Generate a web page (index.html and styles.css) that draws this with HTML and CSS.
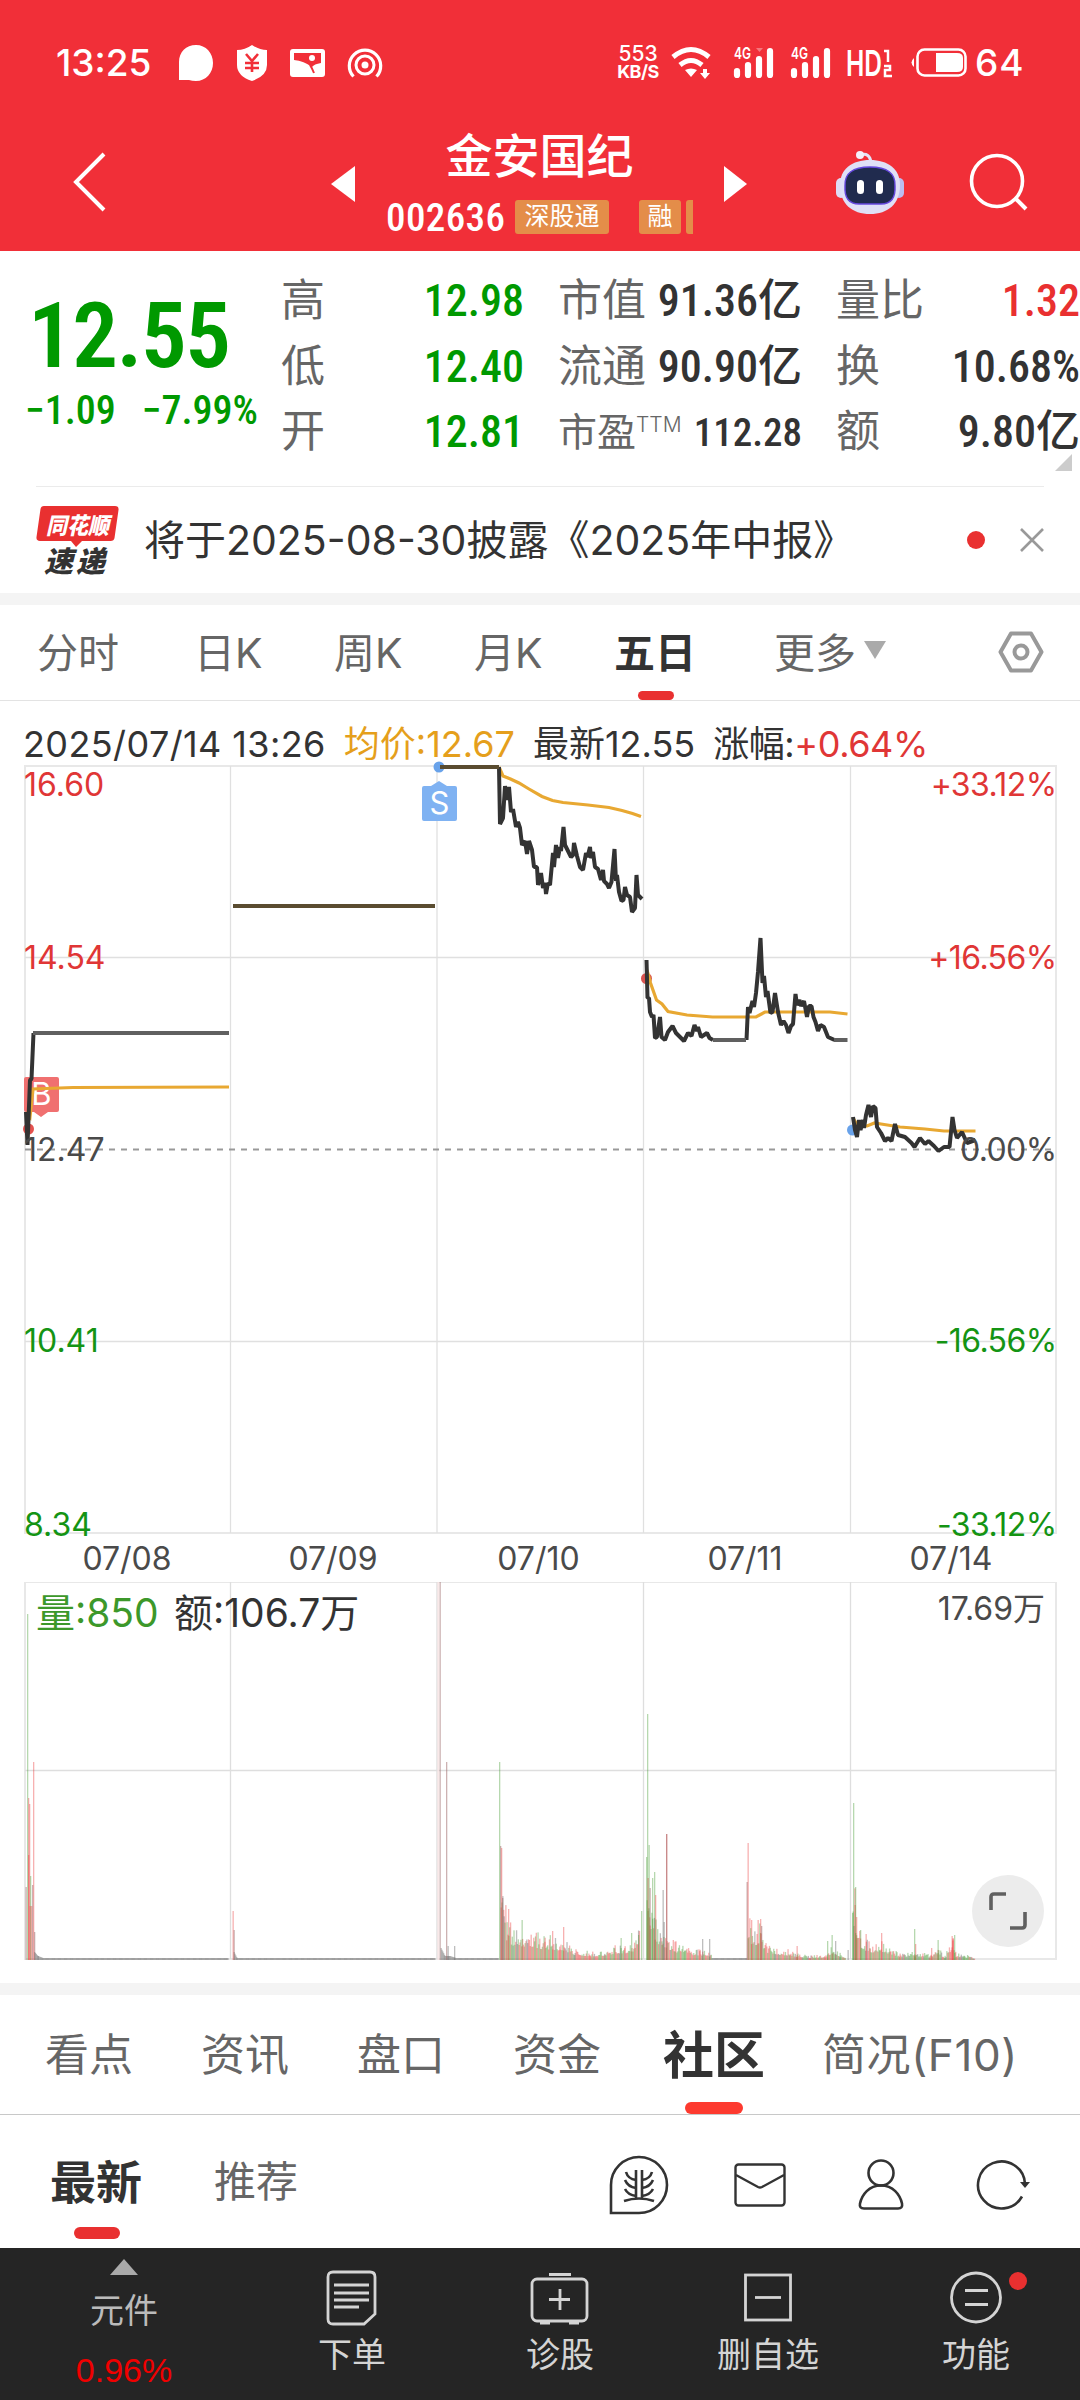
FILE: index.html
```html
<!DOCTYPE html>
<html lang="zh-CN">
<head>
    <meta charset="UTF-8">
    <meta name="viewport" content="width=device-width, initial-scale=1.0">
    <title>金安国纪 002636</title>
    <link rel="stylesheet" href="styles.css">
</head>
<body>
    <header class="top">
        <div class="status-bar">
            <span class="clock">13:25</span>
            <svg class="status-left" width="210" height="40" viewBox="0 0 210 40" fill="#fff">
                <path d="M2 37V19C2 9 9 2 19 2s17 8 17 18-7 18-17 18q-4 0-7-1z"/>
                <path d="M75 2q7 5 15 5v15q0 11-15 16q-15-5-15-16V7q8 0 15-5z"/>
                <path d="M69 11l6 7 6-7M68 20h14M68 25h14M75 18v11" fill="none" stroke="#f12f38" stroke-width="2.6"/>
                <rect x="113" y="6" width="35" height="28" rx="3"/>
                <path d="M117 10h27v10q-7 1-9 4-8-6-18-7z" fill="#f12f38"/>
                <path d="M133 22q2 3 4 8" fill="none" stroke="#f12f38" stroke-width="2"/>
                <circle cx="135" cy="15" r="3"/>
                <circle cx="188" cy="22" r="3.5"/>
                <circle cx="188" cy="22" r="9" fill="none" stroke="#fff" stroke-width="3"/>
                <path d="M176.500 33.500a15.700 15.700 0 1 1 23 0" fill="none" stroke="#fff" stroke-width="3.200"/>
            </svg>
            <div class="speed"><span>553</span><b>KB/S</b></div>
            <svg class="status-right" width="222" height="40" viewBox="0 0 222 40" fill="#fff">
                <path d="M3 14q18-15 36 0" fill="none" stroke="#fff" stroke-width="5"/>
                <path d="M10 22q11-9 22 0" fill="none" stroke="#fff" stroke-width="5"/>
                <path d="M15 27q6-3 12 0l-6 7zM33 26h4v4h3l-5 6-5-6h3z"/>
                <text class="net" x="64" y="16" textLength="17" lengthAdjust="spacingAndGlyphs">4G</text>
                <path d="M67 28v4M78 22v10M89 16v16M100 8v24M124 28v4M135 22v10M146 16v16M157 8v24" stroke="#fff" stroke-width="6.200" stroke-linecap="round"/>
                <path d="M86 5h7l-3.500 4z" opacity=".35"/>
                <text class="net" x="121" y="16" textLength="17" lengthAdjust="spacingAndGlyphs">4G</text>
                <text class="hd" x="176" y="33" textLength="36" lengthAdjust="spacingAndGlyphs">HD</text>
                <path d="M214 8h4v11M214 23h6v4h-5v6h7" fill="none" stroke="#fff" stroke-width="2.500"/>
            </svg>
            <svg class="battery" width="58" height="30" viewBox="0 0 58 30">
                <rect x="6.500" y="1.500" width="48" height="26" rx="7" fill="none" stroke="#fff" stroke-width="2.600"/>
                <path d="M25 5h21q6 0 6 5v9q0 5-6 5H25z" fill="#fff"/>
                <path d="M3 10v9q-5-4.500 0-9z" fill="#fff"/>
            </svg>
            <span class="clock level">64</span>
        </div>
        <div class="title-bar">
            <svg class="back" width="40" height="64" viewBox="0 0 40 64"><path d="M34 4L6 32l28 28" fill="none" stroke="#fff" stroke-width="4"/></svg>
            <svg class="prev" width="24" height="36" viewBox="0 0 24 36"><path d="M24 0v36L0 18z" fill="#fff"/></svg>
            <div class="stock">
                <div class="stock-name">金安国纪</div>
                <div class="stock-sub">
                    <span class="code"><i class="din">002636</i></span>
                    <span class="tag">深股通</span>
                    <span class="tag tag-rong">融</span>
                    <span class="tag tag-cut"></span>
                </div>
            </div>
            <svg class="next" width="24" height="36" viewBox="0 0 24 36"><path d="M0 0v36l23-18z" fill="#fff"/></svg>
            <svg class="robot" width="70" height="66" viewBox="0 0 70 66">
                <path d="M25 6q10-3 11 8" fill="none" stroke="#e4e3f6" stroke-width="3"/>
                <circle cx="25" cy="6" r="4" fill="#f4f0fa"/>
                <rect x="1" y="29" width="10" height="20" rx="5" fill="#dedcf5"/>
                <rect x="59" y="29" width="10" height="20" rx="5" fill="#bcbdf0"/>
                <path d="M5 36c0-16 12-25 30-25s30 9 30 25c0 19-12 29-30 29S5 55 5 36z" fill="#e0e0f6"/>
                <path d="M10 37q-1-19 25-19t25 19q1 18-14 18H24q-15 0-14-18z" fill="#202b4e" stroke="#6548dd" stroke-width="1.500"/>
                <rect x="22" y="31" width="7" height="14" rx="3.500" fill="#fff"/>
                <rect x="41" y="31" width="7" height="14" rx="3.500" fill="#fff"/>
            </svg>
            <svg class="search" width="60" height="60" viewBox="0 0 60 60"><circle cx="28" cy="29" r="25.500" fill="none" stroke="#fff" stroke-width="3.600"/><path d="M46 46l11 11" stroke="#fff" stroke-width="4"/></svg>
        </div>
    </header>

    <section class="quote">
        <div class="price-box">
            <div class="price"><i class="din">12.55</i></div>
            <div class="change"><i class="din">−1.09</i><i class="din pct">−7.99%</i></div>
        </div>
        <div class="stats">
            <span class="label">高</span><span class="value green"><i class="din">12.98</i></span>
            <span class="label">市值</span><span class="value"><i class="din">91.36</i>亿</span>
            <span class="label">量比</span><span class="value red"><i class="din">1.32</i></span>
            <span class="label">低</span><span class="value green"><i class="din">12.40</i></span>
            <span class="label">流通</span><span class="value"><i class="din">90.90</i>亿</span>
            <span class="label">换</span><span class="value"><i class="din">10.68%</i></span>
            <span class="label">开</span><span class="value green"><i class="din">12.81</i></span>
            <span class="label small">市盈<sup>TTM</sup></span><span class="value small"><i class="din">112.28</i></span>
            <span class="label">额</span><span class="value"><i class="din">9.80</i>亿</span>
        </div>
        <svg class="corner" width="17" height="17" viewBox="0 0 17 17"><path d="M17 0v17H0z" fill="#ccc"/></svg>
    </section>

    <section class="notice">
        <svg width="84" height="72" viewBox="0 0 84 72">
            <path d="M8 2h71q4 0 3.500 4l-4 28q-.5 3-4 3H46l-6 6-5-6H4q-4 0-3.500-4l4-28q.5-3 3.500-3z" fill="#e93030"/>
            <text class="logo-a" x="10" y="30" textLength="63" lengthAdjust="spacingAndGlyphs">同花顺</text>
            <text class="logo-b" x="8" y="68">速</text>
            <text class="logo-b" x="40" y="68">递</text>
        </svg>
        <p>将于2025-08-30披露《2025年中报》</p>
        <span class="dot"></span>
        <svg class="close" width="24" height="24" viewBox="0 0 24 24"><path d="M1 1l22 22M23 1L1 23" stroke="#999" stroke-width="2.600"/></svg>
    </section>

    <nav class="periods">
        <span>分时</span>
        <span>日K</span>
        <span>周K</span>
        <span>月K</span>
        <span class="active">五日</span>
        <span class="more">更多<svg width="22" height="18" viewBox="0 0 22 18"><path d="M0 0h22L11 18z" fill="#aaa"/></svg></span>
        <svg class="gear" width="46" height="42" viewBox="0 0 46 42" fill="none" stroke="#999" stroke-width="4"><path d="M13 2.500h20L43.500 21 33 39.500H13L2.500 21z" stroke-linejoin="round"/><circle cx="23" cy="21" r="6.500"/></svg>
    </nav>

    <div class="chart-info">
        <span class="time">2025/07/14 13:26</span>
        <span class="avg">均价:12.67</span>
        <span>最新12.55</span>
        <span class="rise">涨幅:<em>+0.64%</em></span>
    </div>

    <svg class="price-chart" width="1080" height="832" viewBox="0 0 1080 832">
        <g fill="none" stroke="#e8e8e8" stroke-width="2">
            <rect x="25" y="16" width="1031" height="767"/>
            <path d="M25 207.500H1056M25 591.500H1056M230.500 16V783M437 16V783M643.500 16V783M850.500 16V783" stroke="#e0e0e0" stroke-width="1.300"/>
        </g>
        <path d="M25 399.500H1056" stroke="#999" stroke-width="2" stroke-dasharray="6 6"/>
        <circle cx="28.500" cy="379" r="5.500" fill="#e4524f"/>
        <circle cx="439" cy="17" r="5.500" fill="#68a2ea"/>
        <circle cx="646.500" cy="228.500" r="5.500" fill="#d95350"/>
        <circle cx="852.500" cy="380" r="5.500" fill="#68a2ea"/>
        <path d="M26 327h31q2 0 2 2v31q0 2-2 2h-9l-7 5-7-5h-8q-2 0-2-2v-31q0-2 2-2z" fill="#f07070"/>
        <text class="mark" x="41.500" y="355">B</text>
        <path d="M424 36h7l8-5 8 5h8q2 0 2 2v31q0 2-2 2h-31q-2 0-2-2V38q0-2 2-2z" fill="#7fb2f2"/>
        <text class="mark" x="439.500" y="64">S</text>
        <g fill="none" stroke="#e8a832" stroke-width="3.200">
            <polyline points="26,362 30,367 33,339 73,337.500 229,337"/>
            <polyline points="499,17 503,26 510.500,29 519,33 529,39 542,46.500 552.500,50.500 563,52.500 588,55 609,57.500 622,60.500 632.500,63.500 641,66.500"/>
            <polyline points="647,220 650.500,233 656.500,250 662,254 668,261.500 687,265 712.500,267 756,267 765,262 830,262 847.500,264"/>
            <polyline points="853,368 858,376 867,376 874.500,373 881,374 900,377 925,379 944,381 975.500,381"/>
        </g>
        <g fill="none" stroke="#333" stroke-width="4" stroke-linejoin="bevel">
            <polyline points="26,362 27.500,395 30,330 31.500,329 33.500,283"/>
            <polyline points="499,17 500,74 503,68 505,36 507,50 509,37 511,62 513,59 516,77 518,72 520,78 522,95 525,91 527,104 529,91 532,100 534,117 537,117 538,135 541,123 543,138 545,133 546,144 548,133 550,135 553,103 554,117 556,95 558,108 560,97 561,101 563.500,77 565,95 567,99 571,107 573,105 574,93 577,106 580,117 583,120 586,103 587.500,107 590,97 591,108 593,102 595,117 598,119 601,130 603,120 604,131 607,134 609,138 611.500,132 614.500,99 616,131 617,125 619,142 621.500,151 623.500,150 625,137 627,145 630,147 632,162 635,158 636.500,125 638,145 642,149"/>
            <polyline points="646.500,210 647.500,248 649,248 650,262 652,267 653.500,265 655,288 657,287 660,267 661.500,287 665,290 668,282 672.500,276 676,283 680,287 684,291 688,283 691.500,286 694.500,275 697,281 698,277 701,287 707,283 709.500,288 713,290"/>
            <polyline points="746.500,290 748,257 749.500,263 752.500,251 754,257 756,243 758,222 760.500,188 762.500,233 764,226 766,247 767.500,241 770.500,263 772.500,262 775,243 778,262 781,275 783.500,271 786,275 788.500,283 791,276 793,274 795.500,244 797,255 799.500,250 801,256 804,251 807,267 809,256 811.500,256 813.500,267 815.500,272 818,281 820.500,275 824,277 828,287 834.500,290"/>
            <polyline points="853,367 855,380 857,387 859,370 860.500,380 863,370 864,378 866,365 868.500,355 871,367 873,356 875.500,358 877,377 881,383 885,391 888,388 891.500,391 895,374 898,385 905,387 911.500,393 914.500,397 920,388 925,394 928.500,391 934,396 938.500,401 944,397 949.500,397 952.500,367 954.500,380 957,388 962,382 967,393 975.500,390"/>
        </g>
        <!-- limit-up / limit-down stretches -->
        <path d="M33 283H229M713 290H746M834 290H847.500" stroke="#606060" stroke-width="4"/>
        <path d="M233 156H435M440 17H499" stroke="#5a4c30" stroke-width="4"/>
        <g class="axis">
            <text class="up" x="24" y="46">16.60</text>
            <text class="up" x="24" y="219">14.54</text>
            <text x="24" y="411">12.47</text>
            <text class="down" x="24" y="602">10.41</text>
            <text class="down" x="24" y="785.500">8.34</text>
        </g>
        <g class="axis right">
            <text class="up" x="1056.500" y="46">+33.12%</text>
            <text class="up" x="1056.500" y="219">+16.56%</text>
            <text x="1056.500" y="411">0.00%</text>
            <text class="down" x="1056.500" y="602">-16.56%</text>
            <text class="down" x="1056.500" y="785.500">-33.12%</text>
        </g>
        <g class="axis dates">
            <text x="127" y="820">07/08</text>
            <text x="333" y="820">07/09</text>
            <text x="538.500" y="820">07/10</text>
            <text x="745" y="820">07/11</text>
            <text x="951" y="820">07/14</text>
        </g>
    </svg>

    <div class="volume">
        <svg width="1080" height="401" viewBox="0 0 1080 401">
            <rect x="25" y="0" width="1031" height="377" fill="none" stroke="#e8e8e8" stroke-width="2"/>
            <path d="M25 188.500H1056M230.500 0V377M437 0V377M643.500 0V377M850.500 0V377" stroke="#dedede" stroke-width="1.300"/>
            <g id="bars"></g>
            <text class="vol" x="36" y="45" fill="#3c982a">量:850</text>
            <text class="vol" x="174" y="45" fill="#333">额:106.7万</text>
            <text class="axis-vol" x="1045" y="38">17.69万</text>
        </svg>
        <button class="expand"><svg width="38" height="38" viewBox="0 0 38 38" fill="none" stroke="#606060" stroke-width="3.600"><path d="M2 18V5q0-3 3-3h12M36 20v13q0 3-3 3H21"/></svg></button>
    </div>

    <nav class="sections">
        <span>看点</span>
        <span>资讯</span>
        <span>盘口</span>
        <span>资金</span>
        <span class="active">社区</span>
        <span class="f10">简况(F10)</span>
    </nav>

    <div class="community">
        <span class="active">最新</span>
        <span class="rec">推荐</span>
        <div class="tools">
            <svg width="60" height="60" viewBox="0 0 60 60" fill="none" stroke="#333" stroke-width="2.600">
                <path d="M2 58V30a28 28 0 1 1 28 28z"/>
                <path d="M27 44V15M33 44V15M15 46q15-5 30 0M17 17q2 7 10 8M16 25q3 7 11 8M16 34q3 6 11 7M43 17q-2 7-10 8M44 25q-3 7-11 8M44 34q-3 6-11 7"/>
            </svg>
            <svg class="mail" width="52" height="44" viewBox="0 0 52 44" fill="none" stroke="#333" stroke-width="2.400"><rect x="1.500" y="1.500" width="49" height="41" rx="3"/><path d="M2 12l22 12q2 1 4 0l22-12"/></svg>
            <svg class="person" width="46" height="52" viewBox="0 0 46 52" fill="none" stroke="#333" stroke-width="2.600"><circle cx="23" cy="14" r="12.500"/><path d="M23 26.500c-12 0-19 9-21 18q-1 5 4 5h34q5 0 4-5c-2-9-9-18-21-18z"/></svg>
            <svg class="refresh" width="56" height="52" viewBox="0 0 56 52" fill="none" stroke="#333" stroke-width="2.600"><path d="M49 25A23.500 23.500 0 1 0 46 37.500"/><path d="M44 23h10l-5 6z" fill="#333" stroke="none"/></svg>
        </div>
    </div>

    <footer class="bottom">
        <div class="sector">
            <svg width="28" height="16" viewBox="0 0 28 16"><path d="M14 0l14 16H0z" fill="#aaa"/></svg>
            <span>元件</span>
            <b>0.96%</b>
        </div>
        <div class="action">
            <svg width="52" height="56" viewBox="0 0 52 56" fill="none" stroke="#d4d4d4" stroke-width="2.800"><path d="M7 2h37q5 0 5 5v37L38 54H7q-5 0-5-5V7q0-5 5-5z"/><path d="M8 15h35M8 23h35M8 30h35M8 37h25"/></svg>
            <span>下单</span>
        </div>
        <div class="action">
            <svg width="60" height="56" viewBox="0 0 60 56" fill="none" stroke="#d4d4d4" stroke-width="2.800"><rect x="2" y="9" width="55" height="42" rx="5"/><path d="M19 4.500h22M30 19v21M19 29.500h21M10 53h10M39 53h10"/></svg>
            <span>诊股</span>
        </div>
        <div class="action">
            <svg width="48" height="56" viewBox="0 0 48 56" fill="none" stroke="#d4d4d4" stroke-width="2.800"><rect x="1.500" y="5" width="45" height="45"/><path d="M11 27.500h26"/></svg>
            <span>删自选</span>
        </div>
        <div class="action">
            <svg width="54" height="56" viewBox="0 0 54 56" fill="none" stroke="#d4d4d4" stroke-width="2.800"><circle cx="27" cy="27.500" r="24.500"/><path d="M16 20.500h23M16 34.500h23"/></svg>
            <span>功能</span>
            <i class="badge"></i>
        </div>
    </footer>

    <script src="script.js"></script>
</body>
</html>
```
FILE: styles.css
```css
* {
    box-sizing: border-box;
}
body {
    margin: 0;
    width: 1080px;
    height: 2400px;
    overflow: hidden;
    background: #fff;
    color: #333;
    font-family: Inter, "Noto Sans CJK SC", sans-serif;
}
svg {
    display: block;
    flex: none;
}
i, em {
    font-style: normal;
}
.din {
    font-family: "Roboto Condensed", Roboto, sans-serif;
    font-weight: 500;
    display: inline-block;
}

/* header */
.top {
    height: 251px;
    background: #f12f38;
    color: #fff;
}
.status-bar {
    display: flex;
    align-items: center;
    height: 126px;
    padding-left: 56px;
}
.clock {
    width: 98px;
    font-size: 37px;
    font-weight: 500;
    line-height: 40px;
}
.status-left {
    margin: 0 0 0 23px;
}
.speed {
    width: 46px;
    margin-left: 228px;
    text-align: center;
    font-size: 21px;
    line-height: 18px;
    font-weight: 500;
}
.speed span, .speed b {
    display: block;
}
.speed b {
    font-size: 18px;
    letter-spacing: -0.5px;
}
.status-right {
    margin-left: 9px;
}
.net {
    font-size: 16px;
    font-weight: 600;
}
.hd {
    font-size: 36px;
    font-weight: 600;
}
.battery {
    margin-left: 19px;
}
.level {
    width: auto;
    margin-left: 6px;
    letter-spacing: 1px;
}
.title-bar {
    display: flex;
    align-items: center;
    height: 111px;
}
.back {
    margin-left: 70px;
}
.prev {
    margin: 4px 0 0 221px;
}
.stock {
    width: 307px;
    margin: 0 31px;
    height: 111px;
}
.stock-name {
    text-align: center;
    font-size: 47px;
    line-height: 60px;
    font-weight: 500;
}
.stock-sub {
    display: flex;
    align-items: center;
    height: 34px;
    margin-top: 14px;
    overflow: hidden;
}
.code {
    flex: none;
    width: 129px;
    font-size: 39px;
    line-height: 34px;
    letter-spacing: 0.4px;
}
.tag {
    flex: none;
    width: 94px;
    height: 34px;
    border-radius: 3px;
    background: #e48d49;
    font-size: 25px;
    line-height: 33px;
    text-align: center;
}
.tag-rong {
    width: 42px;
    margin-left: 30px;
}
.tag-cut {
    width: 12px;
    margin-left: 5px;
}
.next {
    margin-top: 4px;
}
.robot {
    margin-left: 87px;
}
.search {
    margin: 0 0 0 64px;
}

/* quote */
.quote {
    position: relative;
    display: flex;
    height: 235px;
    padding-top: 17px;
}
.price-box {
    width: 281px;
    color: #090;
}
.price {
    margin-top: 27px;
    padding-left: 28px;
    font-size: 91px;
    line-height: 78px;
    letter-spacing: -1.5px;
}
.price .din {
    font-weight: 600;
}
.change {
    display: flex;
    padding: 6px 0 0 25px;
    font-size: 40px;
    line-height: 60px;
}
.pct {
    margin-left: 26px;
}
.stats {
    display: grid;
    grid-template-columns: 90px 153px 131px 147px 128px 150px;
    grid-auto-rows: 65.5px;
    width: 799px;
    font-size: 44px;
    line-height: 65px;
    white-space: nowrap;
}
.label {
    color: #666;
}
.stats .label:nth-child(6n + 3), .stats .label:nth-child(6n + 5) {
    padding-left: 34px;
}
.value {
    text-align: right;
    font-weight: 500;
}
.green {
    color: #090;
}
.red {
    color: #e93030;
}
.stats .small {
    font-size: 39px;
}
.label sup {
    font-size: 21px;
    line-height: 1;
    font-weight: 300;
}
.corner {
    position: absolute;
    right: 8px;
    bottom: 15px;
}

/* notice */
.notice {
    display: flex;
    align-items: center;
    height: 107px;
    margin: 0 36px;
    border-top: 1px solid #ebebeb;
}
.notice p {
    width: 796px;
    margin: 0 0 0 24px;
    padding-bottom: 6px;
    font-size: 41px;
    white-space: nowrap;
}
.logo-a, .logo-b {
    font-size: 23px;
    font-weight: 900;
    font-style: italic;
    fill: #fff;
}
.logo-b {
    font-size: 29px;
    fill: #333;
}
.dot {
    width: 18px;
    height: 18px;
    border-radius: 50%;
    background: #e93030;
    margin-left: 27px;
}
.close {
    margin-left: 35px;
}

/* period tabs */
.periods {
    display: flex;
    align-items: center;
    height: 108px;
    padding: 0 0 6px 37px;
    border-top: 12px solid #f4f4f4;
    border-bottom: 1px solid #e3e3e3;
    font-size: 41px;
    color: #666;
}
.periods span {
    width: 140px;
    white-space: nowrap;
}
.periods span:first-child {
    width: 157px;
}
.periods .active, .sections .active, .community .active {
    position: relative;
    color: #333;
    font-weight: 700;
}
.periods .active {
    width: 160px;
}
.active::after {
    content: "";
    position: absolute;
    left: 24px;
    bottom: -20px;
    width: 36px;
    height: 9px;
    border-radius: 5px;
    background: #e93030;
}
.periods .more {
    display: flex;
    align-items: center;
    gap: 8px;
    width: 224px;
}
.gear {
    margin-top: 5px;
}

/* charts */
.chart-info {
    display: flex;
    gap: 18px;
    height: 49px;
    padding: 20px 0 0 23px;
    font-size: 36px;
    line-height: 46px;
    white-space: nowrap;
}
.time {
    letter-spacing: 0.4px;
}
.avg {
    color: #e59f1c;
}
.rise {
    letter-spacing: -0.4px;
}
.rise em {
    color: #e03636;
}
.mark {
    font-size: 31px;
    fill: #fff;
    text-anchor: middle;
}
.axis {
    font-size: 32px;
    fill: #4a4a4a;
}
.right {
    text-anchor: end;
    letter-spacing: -0.6px;
}
.dates {
    text-anchor: middle;
}
.up {
    fill: #e03636;
}
.down {
    fill: #149414;
}
.volume {
    position: relative;
}
.vol {
    font-size: 39px;
}
.axis-vol {
    font-size: 32px;
    fill: #4a4a4a;
    text-anchor: end;
}
.expand {
    position: absolute;
    right: 36px;
    top: 293px;
    display: flex;
    align-items: center;
    justify-content: center;
    width: 72px;
    height: 72px;
    padding: 0;
    border: none;
    border-radius: 50%;
    background: #ececec;
}

/* section tabs */
.sections {
    display: flex;
    align-items: center;
    height: 132px;
    padding: 0 0 6px 45px;
    border-top: 12px solid #f4f4f4;
    border-bottom: 1px solid #c8c8c8;
    font-size: 44px;
    color: #666;
}
.sections span {
    width: 156px;
    white-space: nowrap;
}
.sections .active {
    width: 159px;
    margin-left: -6px;
    font-size: 51px;
}
.sections .active::after {
    left: 22px;
    bottom: -25px;
    width: 58px;
    height: 12px;
    border-radius: 6px;
    background: #fd3a2f;
}
.sections .f10 {
    width: auto;
    letter-spacing: 0.6px;
}
.community {
    display: flex;
    align-items: center;
    height: 133px;
    padding: 0 50px 6px;
    font-size: 46px;
}
.community .active {
    flex: none;
    width: 164px;
}
.community .active::after {
    left: 24px;
    bottom: -27px;
    width: 46px;
    height: 12px;
    border-radius: 6px;
}
.rec {
    flex: none;
    width: 395px;
    font-size: 42px;
    color: #666;
}
.tools {
    display: flex;
    align-items: center;
    margin-top: 13px;
}
.mail {
    margin-left: 65px;
}
.person {
    margin-left: 72px;
}
.refresh {
    margin-left: 72px;
}

/* bottom bar */
.bottom {
    display: grid;
    grid-template-columns: 248px 208px 208px 208px 208px;
    height: 152px;
    background: #252525;
    color: #d4d4d4;
    font-size: 34px;
    line-height: 44px;
}
.sector, .action {
    position: relative;
    display: flex;
    flex-direction: column;
    align-items: center;
}
.sector {
    padding-top: 11px;
}
.sector span {
    margin-top: 14px;
    color: #bbb;
}
.sector b {
    margin-top: 15px;
    color: #f00000;
    font: 34px/44px "Liberation Sans", sans-serif;
}
.action {
    padding-top: 22px;
}
.action span {
    margin-top: 7px;
}
.badge {
    position: absolute;
    right: 53px;
    top: 24px;
    width: 18px;
    height: 18px;
    border-radius: 50%;
    background: #e93030;
}
```
FILE: script.js
```javascript
const BASE = 377;
const COLORS = { r: '#e9303060', g: '#3c982a60', k: '#6b6b6b70', b: '#9c656680' };

// single tall bars: [x, height, colour]
const peaks = [
    [26, 73, 'b'], [27.5, 346, 'g'], [28.5, 162, 'r'], [29.5, 156, 'r'], [28.5, 105, 'r'], [30.5, 84, 'g'], [30, 54, 'r'], [31.5, 54, 'r'], [32.5, 75, 'b'], [33.5, 198, 'r'], [34.5, 28, 'b'],
    [233, 49, 'r'], [234, 30, 'b'],
    [440, 379, 'b'], [438, 379, 'p'], [446.5, 198, 'b'], [448, 14, 'k'], [454.5, 14, 'k'],
    [499.5, 198, 'g'], [500.5, 114, 'b'], [501.5, 112, 'r'], [502.5, 62, 'b'], [508.5, 51, 'r'], [522, 40, 'g'], [563.5, 33, 'r'], [552.5, 29, 'r'], [621, 22, 'g'], [631.5, 27, 'g'], [638.5, 25, 'g'], [641.5, 49, 'g'],
    [646.5, 103, 'g'], [647.5, 246, 'g'], [648, 82, 'r'], [649, 115, 'g'], [650, 72, 'b'], [652.5, 82, 'g'], [654.5, 88, 'g'], [655.5, 65, 'r'], [663, 70, 'k'], [664, 38, 'k'], [666.5, 126, 'r'], [666.5, 126, 'b'],
    [702.5, 21, 'k'], [709.5, 21, 'k'], [747, 78, 'b'], [748, 117, 'r'], [751.5, 40, 'r'], [758, 40, 'r'], [760.5, 41, 'r'], [761.5, 34, 'b'], [797, 14, 'r'], [827.5, 19, 'g'], [832, 25, 'g'], [835.5, 19, 'k'], [848, 10, 'k'],
    [852.5, 47, 'g'], [853.5, 157, 'g'], [855, 55, 'r'], [855.5, 73, 'g'], [856.5, 43, 'r'], [860.5, 30, 'g'], [866, 26, 'r'], [881.5, 27, 'r'], [914.5, 31, 'g'], [915.5, 16, 'r'], [938, 20, 'g'], [931.5, 12, 'r'], [952, 24, 'r'], [953, 22, 'r'], [954.5, 25, 'g']
];

// base level of the small bars: [x, height] between which the level is interpolated
const levels = [
    [[34.5, 8, 'k'], [38, 4, 'k'], [43, 2, 'k'], [228, 2, 'k']],
    [[234, 8, 'k'], [237, 2, 'k'], [435, 2, 'k']],
    [[441, 12, 'k'], [445, 4, 'k'], [450, 4, 'k'], [456, 2, 'k'], [499, 2, 'k']],
    [[501, 68], [504, 46], [507, 30], [513, 24], [525, 22], [545, 17], [560, 16], [575, 8], [590, 6], [605, 6], [615, 11], [625, 11], [635, 13], [640, 24]],
    [[647, 90], [650, 55], [655, 34], [662, 18], [668, 17], [675, 13], [685, 9], [700, 7], [712, 5]],
    [[712, 2, 'k'], [747, 2, 'k']],
    [[748, 34], [753, 18], [757, 26], [761, 30], [765, 12], [775, 9], [790, 7], [797, 5], [810, 3], [825, 4], [833, 11], [840, 5], [846, 3]],
    [[853, 60], [857, 34], [862, 18], [870, 12], [880, 14], [890, 9], [900, 5], [915, 6], [930, 4], [938, 9], [945, 3], [953, 18], [956, 5], [964, 4], [975, 2]]
];

let seed = 7;
function rnd() {
    seed = (seed * 16807) % 2147483647;
    return seed / 2147483647;
}

let html = '';
function bar(x, h, c) {
    const fill = c === 'p' ? '#f8e4e4' : COLORS[c];
    html += `<rect x="${x - 0.5}" y="${BASE + 1 - h}" width="1.300" height="${h}" fill="${fill}"/>`;
}

levels.forEach(points => {
    for (let i = 0; i < points.length - 1; i++) {
        const [x0, h0, c] = points[i];
        const [x1, h1] = points[i + 1];
        for (let x = x0; x < x1; x += 0.86) {
            const h = h0 + (h1 - h0) * (x - x0) / (x1 - x0);
            const r = rnd();
            if (c) {
                bar(x, h, c);
            } else {
                bar(x, h * (0.6 + r * r * 0.9), rnd() < 0.45 ? 'r' : rnd() < 0.85 ? 'g' : 'k');
            }
        }
    }
});
peaks.forEach(([x, h, c]) => bar(x, h, c));
document.getElementById('bars').innerHTML = html;
```
